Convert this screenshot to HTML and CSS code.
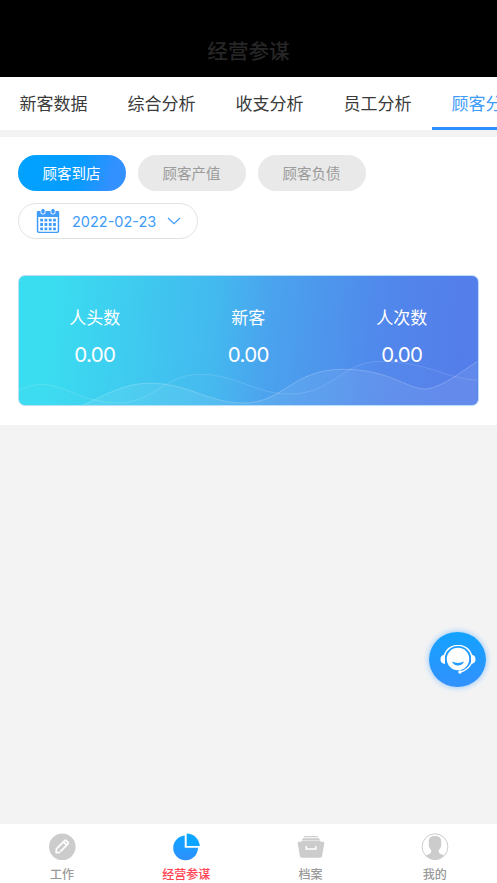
FILE: index.html
```html
<!DOCTYPE html>
<html lang="zh-CN">
<head>
<meta charset="utf-8">
<meta name="viewport" content="width=device-width, initial-scale=1">
<title>经营参谋</title>
<link rel="stylesheet" href="styles.css">
</head>
<body>
<header class="header"><h1>经营参谋</h1></header>
<nav class="tabs">
  <a class="tab">新客数据</a><a class="tab">综合分析</a><a class="tab">收支分析</a><a class="tab">员工分析</a><a class="tab active">顾客分析</a>
</nav>
<main class="panel">
  <div class="pills">
    <button class="pill selected">顾客到店</button><button class="pill">顾客产值</button><button class="pill">顾客负债</button>
  </div>
  <div class="date">
    <svg class="calendar" viewBox="0 0 24 26" width="24" height="26">
      <path fill="#409bf9" fill-rule="evenodd" d="M2 3H22Q23.2 3 23.2 4.200V23Q23.200 25 21.200 25H2.800Q.8 25 .8 23V4.200Q.8 3 2 3ZM2.300 9V22.700Q2.300 23.700 3.300 23.700H20.700Q21.700 23.700 21.700 22.700V9Z"/>
      <path stroke="#fff" stroke-width="5" stroke-linecap="round" d="M7 3V4M17 3V4"/>
      <path stroke="#409bf9" stroke-width="3.400" stroke-linecap="round" d="M7 2.500V4M17 2.500V4"/>
      <path stroke="#409bf9" stroke-width="2.800" stroke-dasharray="2.800 1.500" d="M4.200 12.200H20M4.200 16.500H20M4.200 20.800H20"/>
    </svg>
    <span class="day">2022-02-23</span>
    <svg class="chevron" viewBox="0 0 14 8" width="14" height="8"><path fill="none" stroke="#409bf9" stroke-width="1.200" d="M1 1L7 6.600L13 1"/></svg>
  </div>
  <section class="card">
    <svg class="waves" viewBox="0 0 459 130" preserveAspectRatio="none">
      <path fill="#fff" fill-opacity=".02" d="M0 115C32 100 47 119 76 125C132 139 140 99 181 99C218 99 237 119 270 119C315 119 323 86 362 86C407 86 426 103 459 105V130H0Z"/>
      <path fill="none" stroke="#fff" stroke-opacity=".15" d="M0 115C32 100 47 119 76 125C132 139 140 99 181 99C218 99 237 119 270 119C315 119 323 86 362 86C407 86 426 103 459 105"/>
      <path fill="#fff" fill-opacity=".08" d="M64 130C88 120 103 108 132 108C169 108 190 128 224 128C266 128 272 94 325 94C370 94 389 114 407 114C425 112 443 96 459 86V130Z"/>
      <path fill="none" stroke="#fff" stroke-opacity=".22" d="M64 130C88 120 103 108 132 108C169 108 190 128 224 128C266 128 272 94 325 94C370 94 389 114 407 114C425 112 443 96 459 86"/>
    </svg>
    <div class="stat"><span>人头数</span><b>0.00</b></div>
    <div class="stat"><span>新客</span><b>0.00</b></div>
    <div class="stat"><span>人次数</span><b>0.00</b></div>
  </section>
</main>
<button class="support" aria-label="客服">
  <svg viewBox="0 0 36 30" width="36" height="30">
    <circle cx="18" cy="14" r="11.200" fill="#fff"/>
    <path fill="none" stroke="#fff" stroke-width="1.400" d="M4.500 10.500C8-3 28-3 31.500 10.500M31.500 18C29 23 25 26 20 27"/>
    <path fill="#fff" d="M5 9.500V19Q.5 18.500 .5 14.200Q.5 10 5 9.500M31 9.500V19Q35.500 18.500 35.500 14.200Q35.500 10 31 9.500"/>
    <circle cx="20" cy="27" r="1.700" fill="#fff"/>
    <path fill="#249cff" d="M12 16.500Q18 19.300 24 16.500Q22.500 20.500 18 20.500Q13.500 20.500 12 16.500"/>
  </svg>
</button>
<footer class="bottom">
  <a class="item">
    <svg viewBox="0 0 28 28" width="28" height="28"><circle cx="14.300" cy="13.800" r="13.300" fill="#ccc"/><path fill="none" stroke="#fff" stroke-width="1.700" stroke-linejoin="round" stroke-linecap="round" d="M11.500 19.500L8.200 19.700L8.400 15.900L16.700 7.600Q17.500 6.800 18.300 7.600L20 9.300Q20.800 10.100 20 10.900L12.800 18.100M16 9.500L18.200 11.700"/></svg>
    <span>工作</span></a>
  <a class="item current">
    <svg viewBox="0 0 28 28" width="28" height="28"><defs><linearGradient id="pie" x1="0" y1="0" x2="0" y2="1"><stop stop-color="#0ca5ff"/><stop offset="1" stop-color="#2f8ffc"/></linearGradient></defs><path fill="url(#pie)" d="M12.700 2.500V14.800H26A12.400 12.400 0 1 1 12.700 2.500Z"/><path fill="#0ca5ff" d="M14.700 .5A13 13 0 0 1 27.700 13.100H14.700Z"/></svg>
    <span>经营参谋</span></a>
  <a class="item">
    <svg viewBox="0 0 28 28" width="28" height="28"><path fill="#ccc" d="M7.500 3H20.500L21.500 4.200H6.500ZM6 5.200H22L23.200 7.400H4.800ZM4.500 8H23.500V8.800H26Q27.500 8.800 27.300 10.300L25.200 22.800Q24.900 24.700 23 24.700H5Q3.100 24.700 2.800 22.800L.7 10.300Q.5 8.800 2 8.800H4.500Z"/><path fill="none" stroke="#fff" stroke-width="1.500" d="M9.200 13V16H18.800V13"/></svg>
    <span>档案</span></a>
  <a class="item">
    <svg viewBox="0 0 28 28" width="28" height="28"><circle cx="14" cy="13.700" r="12.900" fill="#fff" stroke="#ccc"/><path fill="#ccc" d="M14 3C18.800 3 20.500 5.500 20.200 9.500C20.700 13.500 19.500 15.500 17.800 17C17.500 21 19 20.500 23 22.500Q19.500 26.700 14 26.700Q8.500 26.700 5 22.500C9 20.500 10.500 21 10.200 17C8.500 15.500 7.300 13.500 7.800 9.500C7.500 5.500 9.200 3 14 3Z"/></svg>
    <span>我的</span></a>
</footer>
</body>
</html>
```

FILE: styles.css
```css
* { box-sizing: border-box; }
body {
  margin: 0;
  height: 883px;
  display: flex;
  flex-direction: column;
  overflow: hidden;
  background: #f3f3f4;
  font-family: "Noto Sans CJK SC", sans-serif;
}
button { border: 0; padding: 0; font: inherit; }
.header {
  height: 77px;
  padding-top: 24px;
  background: #000;
  text-align: center;
}
.header h1 {
  margin: 0;
  color: #262626;
  font-size: 20.6px;
  font-weight: 500;
  line-height: 52px;
}
.tabs {
  display: flex;
  height: 53px;
  background: #fff;
  overflow: hidden;
}
.tab {
  flex: 0 0 108px;
  padding-right: 1px;
  text-align: center;
  color: #3a3a3a;
  font-size: 17px;
  line-height: 52px;
}
.tab.active { color: #409bf9; border-bottom: 3px solid #2c91ff; }
.panel {
  height: 288px;
  margin-top: 7px;
  padding: 18px 18px 0;
  background: #fff;
}
.pills { display: flex; gap: 12px; }
.pill {
  width: 108px;
  height: 36px;
  padding-right: 1px;
  border-radius: 18px;
  background: #e9e9e9;
  color: #9b9b9b;
  font-size: 14.5px;
  line-height: 36px;
}
.pill.selected {
  background: linear-gradient(105deg, #00a2ff 0%, #069cff 55%, #3290ff 85%);
  color: #fff;
}
.date {
  display: flex;
  align-items: center;
  width: 180px;
  height: 36px;
  margin-top: 12px;
  padding-left: 17px;
  border: 1px solid #e2e2e5;
  border-radius: 18px;
}
.day {
  width: 84px;
  margin: 0 11px 0 12px;
  color: #409bf9;
  font: 14.5px Inter, sans-serif;
  white-space: nowrap;
}
.card {
  position: relative;
  display: grid;
  grid-template-columns: repeat(3, 153.5px);
  width: 460.5px;
  height: 131px;
  margin-top: 36px;
  padding: 26px 0 0;
  border: 1px solid #b9dff9;
  border-radius: 7px;
  overflow: hidden;
  background: linear-gradient(95deg, #3adcf0 8%, #43b8ef 43%, #4aa3ee 54%, #5186eb 80%, #547eea 96%);
  color: #fff;
}
.waves { position: absolute; inset: 0; width: 100%; height: 100%; }
.stat {
  position: relative;
  display: flex;
  flex-direction: column;
  align-items: center;
  padding-right: 2px;
}
.stat span { font-size: 17px; line-height: 30px; }
.stat b { margin-top: 8px; font: 20.5px/30px Inter, sans-serif; letter-spacing: -.7px; }
.support {
  position: absolute;
  left: 429px;
  top: 632px;
  width: 57px;
  height: 55px;
  display: grid;
  place-items: center;
  border-radius: 50%;
  background: linear-gradient(#12a2ff, #3291fd);
  box-shadow: 0 0 6px #86c0f9;
}
.bottom {
  display: grid;
  grid-template-columns: repeat(4, 1fr);
  height: 59px;
  margin-top: auto;
  padding-top: 9px;
  background: #fff;
}
.item {
  display: flex;
  flex-direction: column;
  align-items: center;
  color: #999;
  font-size: 12px;
  font-weight: 500;
}
.item span { margin-top: 4px; line-height: 18px; }
.item.current { color: #ff4351; }
```
